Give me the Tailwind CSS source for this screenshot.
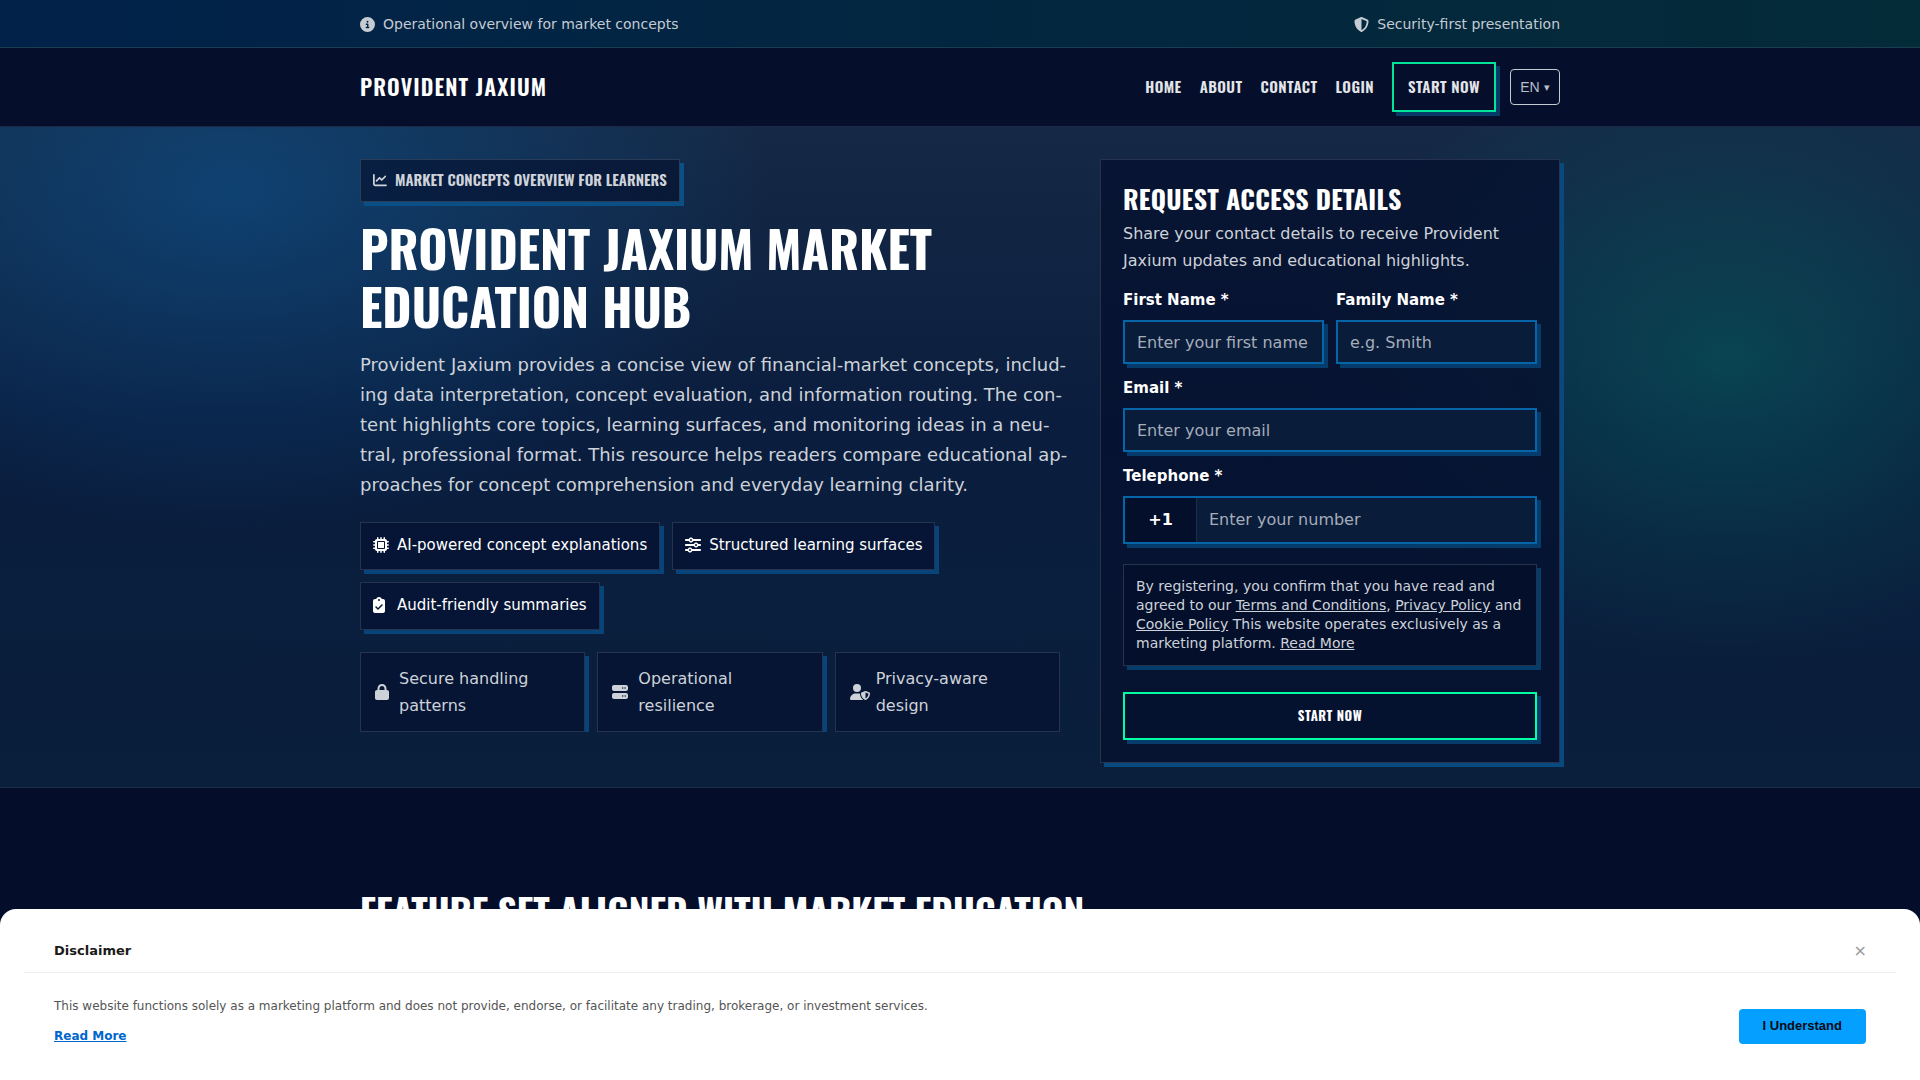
<!DOCTYPE html>
<html lang="en">
<head>
<meta charset="utf-8">
<meta name="viewport" content="width=device-width, initial-scale=1">
<title>Provident Jaxium</title>
<script src="https://cdn.jsdelivr.net/npm/@tailwindcss/browser@4"></script>
</head>
<body class="min-h-screen bg-[#040e2b] font-['DejaVu_Sans',sans-serif] text-base text-white">

<div class="border-b border-[#1c3c52] bg-linear-to-r from-[#02224a] via-[#032640] to-[#042b38] text-[14px]">
  <div class="mx-auto flex h-[47px] max-w-[1200px] items-center justify-between pt-[2px] text-[#c5cbd3]">
    <span class="flex items-center gap-2">
      <svg class="size-[15px]" viewBox="0 0 512 512" fill="currentColor" aria-hidden="true"><path d="M256 512A256 256 0 1 0 256 0a256 256 0 1 0 0 512zM216 336h24V272H216c-13.300 0-24-10.700-24-24s10.700-24 24-24h48c13.300 0 24 10.700 24 24v88h8c13.300 0 24 10.700 24 24s-10.700 24-24 24H216c-13.300 0-24-10.700-24-24s10.700-24 24-24zm40-208a32 32 0 1 1 0 64 32 32 0 1 1 0-64z"/></svg>
      Operational overview for market concepts
    </span>
    <span class="flex items-center gap-2">
      <svg class="size-[15px]" viewBox="0 0 512 512" fill="currentColor" aria-hidden="true"><path d="M256 0c4.600 0 9.200 1 13.400 2.900L457.700 82.800c22 9.300 38.400 31 38.300 57.200c-.5 99.200-41.300 280.700-213.600 363.200c-16.700 8-36.100 8-52.800 0C57.300 420.700 16.500 239.200 16 140c-.1-26.200 16.300-47.900 38.300-57.200L242.700 2.900C246.800 1 251.400 0 256 0zm0 66.800V444.800C394 378 431.100 230.100 432 141.400L256 66.800z"/></svg>
      Security-first presentation
    </span>
  </div>
</div>

<header class="border-b border-[#1d2846] bg-[#050f2c]">
  <div class="mx-auto flex h-[78px] max-w-[1200px] items-center justify-between font-['Oswald',sans-serif] font-semibold">
    <a href="#" class="pb-[2px] text-[22px] tracking-[0.05em]">PROVIDENT JAXIUM</a>
    <nav class="flex items-center gap-[18px] text-[15px] tracking-[0.03em] text-[#e3e5e9]">
      <a href="#" class="pb-[2px]">HOME</a>
      <a href="#" class="pb-[2px]">ABOUT</a>
      <a href="#" class="pb-[2px]">CONTACT</a>
      <a href="#" class="pb-[2px]">LOGIN</a>
      <div class="flex items-center gap-[14px]">
        <a href="#form" class="flex h-[50px] items-center border-2 border-[#04e39a] px-[14px] pb-[2px] shadow-[4px_4px_0_#063a69]">START NOW</a>
        <button class="flex h-9 w-[50px] items-center justify-center gap-1 rounded-[4px] border border-[#c5cbd3] font-['Liberation_Sans',sans-serif] text-[14px] font-normal tracking-normal text-[#b9bec8]">EN <span class="text-[11px]">▾</span></button>
      </div>
    </nav>
  </div>
</header>

<main>
<section class="border-b border-[#1d2c49] bg-[radial-gradient(ellipse_540px_340px_at_12%_10%,#0b5b9c80,#0b5b9c00),radial-gradient(ellipse_420px_300px_at_90%_35%,#06686380,#06686300),linear-gradient(#152946,#0a1d3e_45%,#0a1f3c)] pt-8 pb-6">
  <div class="mx-auto grid max-w-[1200px] grid-cols-[minmax(0,1fr)_460px] items-start gap-10">
    <div>
      <p class="flex h-[43px] w-fit items-center gap-2 border border-[#2a3c58] bg-[#040e2b99] px-3 pb-[2px] font-['Oswald',sans-serif] text-[15px] font-semibold text-[#cfd3da] shadow-[4px_4px_0_#0a4f86]">
        <svg class="size-[14px]" viewBox="0 0 512 512" fill="currentColor" aria-hidden="true"><path d="M64 64c0-17.700-14.300-32-32-32S0 46.300 0 64V400c0 44.200 35.800 80 80 80H480c17.700 0 32-14.300 32-32s-14.300-32-32-32H80c-8.800 0-16-7.200-16-16V64zm406.600 86.600c12.500-12.500 12.500-32.800 0-45.300s-32.800-12.500-45.300 0L320 210.700l-57.400-57.400c-12.500-12.500-32.800-12.500-45.300 0l-112 112c-12.500 12.500-12.500 32.800 0 45.300s32.800 12.500 45.300 0L240 221.300l57.400 57.400c12.500 12.500 32.800 12.500 45.300 0l128-128z"/></svg>
        MARKET CONCEPTS OVERVIEW FOR LEARNERS
      </p>
      <h1 class="mt-4 font-['Oswald',sans-serif] text-[50px] leading-[58px] font-bold">PROVIDENT JAXIUM MARKET EDUCATION HUB</h1>
      <p class="mt-4 -mr-3 text-[18px] leading-[30px] text-[#cdd2d9]">Provident Jaxium provides a concise view of financial-market concepts, includ&shy;ing data interpretation, concept evaluation, and information routing. The con&shy;tent highlights core topics, learning surfaces, and monitoring ideas in a neu&shy;tral, professional format. This resource helps readers compare educational ap&shy;proaches for concept comprehension and everyday learning clarity.</p>

      <ul class="mt-[22px] flex flex-wrap gap-3 text-[15px] leading-[26px]">
        <li class="flex items-center gap-2 border border-[#26334f] bg-[#061535] px-3 pt-[9px] pb-[11px] shadow-[4px_4px_0_#07447a]">
          <svg class="size-4" viewBox="0 0 512 512" fill="currentColor" aria-hidden="true"><path d="M176 24c0-13.300-10.700-24-24-24s-24 10.700-24 24v40c-35.300 0-64 28.700-64 64H24c-13.300 0-24 10.700-24 24s10.700 24 24 24H64v56H24c-13.300 0-24 10.700-24 24s10.700 24 24 24H64v56H24c-13.300 0-24 10.700-24 24s10.700 24 24 24H64c0 35.300 28.700 64 64 64v40c0 13.300 10.700 24 24 24s24-10.700 24-24V448h56v40c0 13.300 10.700 24 24 24s24-10.700 24-24V448h56v40c0 13.300 10.700 24 24 24s24-10.700 24-24V448c35.300 0 64-28.700 64-64h40c13.300 0 24-10.700 24-24s-10.700-24-24-24H448V280h40c13.300 0 24-10.700 24-24s-10.700-24-24-24H448V176h40c13.300 0 24-10.700 24-24s-10.700-24-24-24H448c0-35.300-28.700-64-64-64V24c0-13.300-10.700-24-24-24s-24 10.700-24 24V64H280V24c0-13.300-10.700-24-24-24s-24 10.700-24 24V64H176V24zM160 128H352c17.700 0 32 14.300 32 32V352c0 17.700-14.300 32-32 32H160c-17.700 0-32-14.300-32-32V160c0-17.700 14.300-32 32-32zm192 32H160V352H352V160z"/></svg>
          AI-powered concept explanations
        </li>
        <li class="flex items-center gap-2 border border-[#26334f] bg-[#061535] px-3 pt-[9px] pb-[11px] shadow-[4px_4px_0_#07447a]">
          <svg class="size-4" viewBox="0 0 512 512" fill="currentColor" aria-hidden="true"><path d="M0 416c0 17.700 14.300 32 32 32l54.700 0c12.300 28.300 40.500 48 73.300 48s61-19.700 73.300-48L480 448c17.700 0 32-14.300 32-32s-14.300-32-32-32l-246.700 0c-12.300-28.300-40.500-48-73.300-48s-61 19.700-73.300 48L32 384c-17.700 0-32 14.300-32 32zm128 0a32 32 0 1 1 64 0 32 32 0 1 1 -64 0zM320 256a32 32 0 1 1 64 0 32 32 0 1 1 -64 0zm32-80c-32.800 0-61 19.700-73.300 48L32 224c-17.700 0-32 14.300-32 32s14.300 32 32 32l246.700 0c12.300 28.300 40.500 48 73.300 48s61-19.700 73.300-48l54.700 0c17.700 0 32-14.300 32-32s-14.300-32-32-32l-54.700 0c-12.300-28.300-40.500-48-73.300-48zM192 128a32 32 0 1 1 0-64 32 32 0 1 1 0 64zm73.300-64C253 35.700 224.800 16 192 16s-61 19.700-73.300 48L32 64C14.300 64 0 78.300 0 96s14.300 32 32 32l86.700 0c12.300 28.300 40.500 48 73.300 48s61-19.700 73.300-48L480 128c17.700 0 32-14.300 32-32s-14.300-32-32-32L265.300 64z"/></svg>
          Structured learning surfaces
        </li>
        <li class="flex items-center gap-2 border border-[#26334f] bg-[#061535] px-3 pt-[9px] pb-[11px] shadow-[4px_4px_0_#07447a]">
          <svg class="size-4" viewBox="0 0 512 512" fill="currentColor" aria-hidden="true"><path d="M192 0c-41.800 0-77.400 26.700-90.500 64H64C28.700 64 0 92.700 0 128V448c0 35.300 28.700 64 64 64H320c35.300 0 64-28.700 64-64V128c0-35.300-28.700-64-64-64H282.500C269.400 26.700 233.800 0 192 0zm0 64a32 32 0 1 1 0 64 32 32 0 1 1 0-64zM305 273L177 401c-9.400 9.400-24.600 9.400-33.900 0L79 337c-9.400-9.400-9.400-24.600 0-33.900s24.600-9.400 33.900 0l47 47L271 239c9.400-9.400 24.600-9.400 33.900 0s9.400 24.600 0 33.900z"/></svg>
          Audit-friendly summaries
        </li>
      </ul>

      <ul class="mt-[22px] grid grid-cols-3 gap-3 overflow-hidden leading-[27px] text-[#cdd2d9]">
        <li class="flex items-center gap-[10px] border border-[#26334f] bg-[#051533] px-[14px] py-3 shadow-[4px_4px_0_#07447a]">
          <svg class="h-4 w-[14px] shrink-0" viewBox="0 0 448 512" fill="currentColor" aria-hidden="true"><path d="M144 144v48H304V144c0-44.200-35.800-80-80-80s-80 35.800-80 80zM80 192V144C80 64.500 144.500 0 224 0s144 64.500 144 144v48h16c35.300 0 64 28.700 64 64V448c0 35.300-28.700 64-64 64H64c-35.300 0-64-28.700-64-64V256c0-35.300 28.700-64 64-64H80z"/></svg>
          Secure handling patterns
        </li>
        <li class="flex items-center gap-[10px] border border-[#26334f] bg-[#051533] px-[14px] py-3 shadow-[4px_4px_0_#07447a]">
          <svg class="size-4 shrink-0" viewBox="0 0 512 512" fill="currentColor" aria-hidden="true"><path d="M64 32C28.700 32 0 60.700 0 96v64c0 35.300 28.700 64 64 64H448c35.300 0 64-28.700 64-64V96c0-35.300-28.700-64-64-64H64zm280 72a24 24 0 1 1 0 48 24 24 0 1 1 0-48zm48 24a24 24 0 1 1 48 0 24 24 0 1 1 -48 0zM64 288c-35.300 0-64 28.700-64 64v64c0 35.300 28.700 64 64 64H448c35.300 0 64-28.700 64-64V352c0-35.300-28.700-64-64-64H64zm280 72a24 24 0 1 1 0 48 24 24 0 1 1 0-48zm56 24a24 24 0 1 1 48 0 24 24 0 1 1 -48 0z"/></svg>
          Operational resilience
        </li>
        <li class="flex items-center gap-[6px] border border-[#26334f] bg-[#051533] px-[14px] py-3 shadow-[4px_4px_0_#07447a]">
          <svg class="h-4 w-5 shrink-0" viewBox="0 0 640 512" fill="currentColor" aria-hidden="true"><path d="M224 256A128 128 0 1 0 224 0a128 128 0 1 0 0 256zm-45.700 48C79.800 304 0 383.800 0 482.300C0 498.700 13.300 512 29.700 512H418.300c1.800 0 3.500-.2 5.300-.5c-76.300-55.100-99.800-141-103.100-200.200c-16.100-4.800-33.100-7.300-50.700-7.300H178.300zm308.800-78.300l-120 48C358 277.400 352 286.200 352 296c0 63.300 25.900 168.800 134.800 214.200c5.900 2.500 12.600 2.500 18.500 0C614.100 464.800 640 359.300 640 296c0-9.800-6-18.600-15.100-22.300l-120-48c-5.700-2.300-12.100-2.300-17.800 0zM591.400 312c-3.900 50.700-27.200 116.700-95.400 149.700V273.800L591.400 312z"/></svg>
          Privacy-aware design
        </li>
      </ul>
    </div>

    <form id="form" class="flex flex-col border border-[#26334f] bg-[#05102ecc] p-[22px] shadow-[4px_4px_0_#084a80]">
      <h2 class="font-['Oswald',sans-serif] text-[26px] leading-[34px] font-bold tracking-[0.01em]">REQUEST ACCESS DETAILS</h2>
      <p class="mt-1 leading-[27px] text-[#cdd2d9]">Share your contact details to receive Provident Jaxium updates and educational highlights.</p>
      <div class="mt-[14px] grid grid-cols-2 gap-3">
        <div class="flex flex-col gap-2">
          <label for="first" class="text-[15px] leading-6 font-bold">First Name *</label>
          <input id="first" type="text" placeholder="Enter your first name" class="h-11 w-full min-w-0 border-2 border-[#0665a8] bg-[#091c3a] px-3 shadow-[4px_4px_0_#053c6c] placeholder:text-[#a5adb9]">
        </div>
        <div class="flex flex-col gap-2">
          <label for="last" class="text-[15px] leading-6 font-bold">Family Name *</label>
          <input id="last" type="text" placeholder="e.g. Smith" class="h-11 w-full min-w-0 border-2 border-[#0665a8] bg-[#091c3a] px-3 shadow-[4px_4px_0_#053c6c] placeholder:text-[#a5adb9]">
        </div>
        <div class="col-span-2 flex flex-col gap-2">
          <label for="email" class="text-[15px] leading-6 font-bold">Email *</label>
          <input id="email" type="email" placeholder="Enter your email" class="h-11 w-full min-w-0 border-2 border-[#0665a8] bg-[#091c3a] px-3 shadow-[4px_4px_0_#053c6c] placeholder:text-[#a5adb9]">
        </div>
        <div class="col-span-2 flex flex-col gap-2">
          <label for="tel" class="text-[15px] leading-6 font-bold">Telephone *</label>
          <div class="flex h-12 border-2 border-[#0665a8] bg-[#091c3a] shadow-[4px_4px_0_#053c6c]">
            <span class="flex w-18 items-center justify-center border-r border-[#1d2c49] bg-[#040f2c] font-bold">+1</span>
            <input id="tel" type="tel" placeholder="Enter your number" class="min-w-0 grow px-3 placeholder:text-[#a5adb9]">
          </div>
        </div>
      </div>
      <p class="mt-5 border border-[#26334f] bg-[#040f2c] p-3 text-[14px] leading-[19px] text-[#cdd2d9] shadow-[4px_4px_0_#053c6c]">By registering, you confirm that you have read and agreed to our <a href="#" class="underline">Terms and Conditions</a>, <a href="#" class="underline">Privacy Policy</a> and <a href="#" class="underline">Cookie Policy</a> This website operates exclusively as a marketing platform. <a href="#" class="underline">Read More</a></p>
      <button type="submit" class="mt-[26px] h-12 border-2 border-[#00ffa3] bg-[#05122f] font-['Oswald',sans-serif] text-[13px] font-bold tracking-[0.04em] shadow-[4px_4px_0_#053c6c]">START NOW</button>
    </form>
  </div>
</section>

<section class="pt-24">
  <div class="mx-auto max-w-[1200px]">
    <h2 class="font-['Oswald',sans-serif] text-[37px] leading-[54px] font-bold">FEATURE SET ALIGNED WITH MARKET EDUCATION</h2>
  </div>
</section>
</main>

<aside aria-label="Disclaimer" class="fixed inset-x-0 bottom-0 h-[171px] rounded-t-2xl bg-white px-6">
  <div class="flex h-16 items-center justify-between border-b border-[#eeeeee] px-[30px] pt-5">
    <h2 class="text-[13px] font-bold text-[#1a1a1a]">Disclaimer</h2>
    <button aria-label="Close" class="-mr-px text-[16px] leading-4 text-[#999999]">×</button>
  </div>
  <div class="flex items-center justify-between px-[30px] pt-[18px]">
    <div class="text-[12px] leading-[30px] text-[#555555]">
      <p>This website functions solely as a marketing platform and does not provide, endorse, or facilitate any trading, brokerage, or investment services.</p>
      <a href="#" class="font-bold text-[#0066cc] underline">Read More</a>
    </div>
    <button class="mt-[10px] h-[35px] rounded-[4px] bg-[#059fff] px-6 font-['Liberation_Sans',sans-serif] text-[13px] font-bold text-[#0a0a14]">I Understand</button>
  </div>
</aside>
</body>
</html>
